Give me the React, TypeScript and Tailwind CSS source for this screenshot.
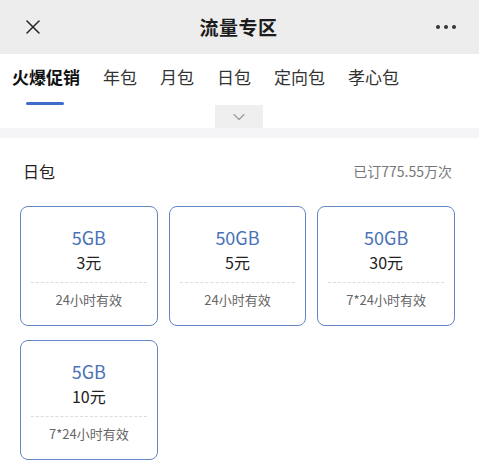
import { X, ChevronDown } from 'lucide-react'

const tabs = ['火爆促销', '年包', '月包', '日包', '定向包', '孝心包']

const plans = [
  { size: '5GB', price: '3元', valid: '24小时有效' },
  { size: '50GB', price: '5元', valid: '24小时有效' },
  { size: '50GB', price: '30元', valid: '7*24小时有效' },
  { size: '5GB', price: '10元', valid: '7*24小时有效' },
]

export default function App() {
  return (
    <div
      className="w-[479px] h-[475px] overflow-hidden bg-white text-[#1c1c1c]"
      style={{ fontFamily: '"Noto Sans CJK SC", "Noto Sans", sans-serif' }}
    >
      {/* top bar */}
      <div className="h-[54px] bg-[#ededed] flex items-center justify-between pl-[21px] pr-[23px]">
        <X className="w-[24px] h-[24px] text-[#222]" strokeWidth={1.5} />
        <div className="text-[19px] font-bold tracking-[0.5px] pr-[4px]">流量专区</div>
        <div className="flex items-center gap-[4px]">
          <span className="w-[4px] h-[4px] rounded-full bg-[#333]" />
          <span className="w-[4px] h-[4px] rounded-full bg-[#333]" />
          <span className="w-[4px] h-[4px] rounded-full bg-[#333]" />
        </div>
      </div>

      {/* tabs */}
      <div className="h-[74px] bg-white flex flex-col">
        <div className="flex items-center gap-[23px] pl-[12px] pt-[10px] h-[36px]">
          {tabs.map((t, i) => (
            <span
              key={t}
              className={i === 0 ? 'text-[17px] leading-[24px] font-bold text-[#111]' : 'text-[17px] leading-[24px] text-[#333]'}
            >
              {t}
            </span>
          ))}
        </div>
        <div className="relative flex-1">
          <div className="absolute left-[26px] top-[12px] w-[38px] h-[3px] rounded-full bg-[#3f6bc9]" />
          <div className="absolute left-[215px] bottom-0 w-[48px] h-[23px] bg-[#efefef] flex items-center justify-center">
            <ChevronDown className="w-[22px] h-[20px] text-[#9a9a9a]" strokeWidth={1.4} />
          </div>
        </div>
      </div>

      <div className="h-[10px] bg-[#f5f5f7]" />

      {/* section */}
      <div className="pl-[20px] pr-[24px] pt-[22px]">
        <div className="flex items-center justify-between pl-[3px] pr-[3px]">
          <span className="text-[16px] leading-[22px] text-[#222]">日包</span>
          <span className="text-[14px] leading-[22px] text-[#777]">已订775.55万次</span>
        </div>
        <div className="grid grid-cols-3 gap-x-[11px] gap-y-[14px] mt-[24px]">
          {plans.map((p, i) => (
            <div
              key={i}
              className="h-[120px] rounded-[8px] border border-[#6486c4] flex flex-col items-center pt-[18px]"
            >
              <div className="text-[18px] leading-[24px] text-[#4a72b6]">{p.size}</div>
              <div className="text-[16px] leading-[22px] mt-[2px] text-[#222]">{p.price}</div>
              <div className="self-stretch mx-[10px] mt-[9px] border-t border-dashed border-[#dcdcdc]" />
              <div className="text-[13px] leading-[18px] mt-[8px] text-[#666]">{p.valid}</div>
            </div>
          ))}
        </div>
      </div>
    </div>
  )
}
